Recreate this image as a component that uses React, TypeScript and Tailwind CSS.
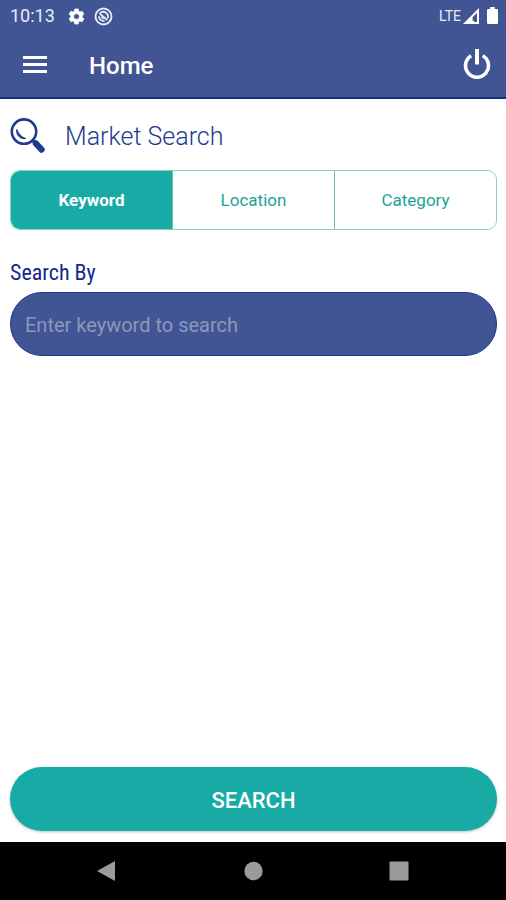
import { useState } from 'react'

const TABS = ['Keyword', 'Location', 'Category']

function StatusBar() {
  return (
    <div className="flex h-8 items-center justify-between pl-[10px] pr-2 text-[#e6ebf5]">
      <div className="flex items-center">
        <span className="w-[57px] text-lg leading-8">10:13</span>
        {/* Gear */}
        <svg className="mr-2 h-[19px] w-[19px]" viewBox="0 0 24 24" fill="#fff" stroke="#fff" strokeWidth="0.8">
          <path d="M19.14 12.94c.04-.3.06-.61.06-.94 0-.32-.02-.64-.07-.94l2.03-1.58a.49.49 0 0 0 .12-.61l-1.92-3.32a.49.49 0 0 0-.59-.22l-2.39.96c-.5-.38-1.03-.7-1.62-.94l-.36-2.54a.48.48 0 0 0-.48-.41h-3.84c-.24 0-.43.17-.47.41l-.36 2.54c-.59.24-1.13.57-1.62.94l-2.39-.96a.49.49 0 0 0-.59.22L2.74 8.87c-.12.21-.08.47.12.61l2.03 1.58c-.05.3-.09.63-.09.94s.02.64.07.94l-2.03 1.58a.49.49 0 0 0-.12.61l1.92 3.32c.12.22.37.29.59.22l2.39-.96c.5.38 1.03.7 1.62.94l.36 2.54c.05.24.24.41.48.41h3.84c.24 0 .44-.17.47-.41l.36-2.54c.59-.24 1.13-.56 1.62-.94l2.39.96c.22.08.47 0 .59-.22l1.92-3.32a.49.49 0 0 0-.12-.61l-2.01-1.58zM12 15.6A3.6 3.6 0 1 1 12 8.4a3.6 3.6 0 0 1 0 7.2z" />
        </svg>
        {/* Round notification mark */}
        <svg className="h-[19px] w-[19px]" viewBox="0 0 19 19" fill="none" stroke="currentColor">
          <circle cx="9.5" cy="9.5" r="8" strokeWidth="1.9" />
          <path d="M6 6.2a4.7 4.7 0 0 1 7.6 5.2" strokeWidth="1.8" />
          <path d="M5 9.2a4.6 4.6 0 0 0 5.6 4.6" strokeWidth="1.8" />
          <path d="M5.4 6.4l7.8 6.6" strokeWidth="1.8" />
          <path d="M7.4 9.6a2.2 2.2 0 0 0 2.4 2" strokeWidth="1.3" />
        </svg>
      </div>
      <div className="flex items-center">
        <span className="mr-[2px] text-sm leading-8">LTE</span>
        <svg className="mr-2 h-4 w-4" viewBox="0 0 16 16">
          <path d="M16 0v16H0zM14 4.8L9.6 9.2v3.6h1.6V14H14z" fill="#fff" fillRule="evenodd" />
        </svg>
        <svg className="h-[18px] w-[11px]" viewBox="0 0 11 18" fill="#fff">
          <path d="M3.2 0h4.6v2H9.8q1.2 0 1.2 1.2v12.6q0 1.2-1.2 1.2H1.2Q0 17 0 15.8V3.2Q0 2 1.2 2h2z" />
        </svg>
      </div>
    </div>
  )
}

function MagnifierIcon() {
  return (
    <svg className="h-9 w-9" viewBox="0 0 36 36" fill="none" stroke="#213a8d">
      <circle cx="14" cy="13.6" r="12.2" strokeWidth="2.6" />
      <path d="M6.8 11.5a7.6 7.6 0 0 0 9 9q-6-1.6-9-9z" fill="#213a8d" strokeWidth="1" />
      <path d="M22.4 22.2l3 3" strokeWidth="2.8" />
      <path d="M25.8 25.4l5.8 6.2" strokeWidth="6.2" strokeLinecap="round" />
    </svg>
  )
}

export default function App() {
  const [tab, setTab] = useState('Keyword')
  const [query, setQuery] = useState('')

  return (
    <div className="flex min-h-screen flex-col bg-white font-[Roboto,sans-serif]">
      <header className="border-b-2 border-[#122e86] bg-[#415595]">
        <StatusBar />
        <div className="flex h-[65px] items-center pl-[23px] pr-[15px] text-white">
          <button type="button" aria-label="Menu" className="mr-[42px]">
            <svg className="block h-[18px] w-6" viewBox="0 0 24 18" fill="currentColor">
              <path d="M0 0h24v3H0zM0 7h24v3H0zM0 14h24v3H0z" />
            </svg>
          </button>
          <h1 className="flex-1 pt-[2px] text-2xl font-medium">Home</h1>
          <button type="button" aria-label="Log out">
            <svg className="block h-[31px] w-7" viewBox="0 0 28 31" fill="none" stroke="currentColor" strokeWidth="3.6">
              <path d="M8.2 6.8a11.5 11.5 0 1 0 11.6 0" />
              <path d="M14 0v15.5" strokeWidth="4" />
            </svg>
          </button>
        </div>
      </header>

      <main className="flex flex-1 flex-col pb-[11px] pl-[10px] pr-[9px] pt-[19px]">
        <div className="flex h-9 items-center">
          <MagnifierIcon />
          <h2 className="ml-[19px] pt-[2px] text-[25px] font-light text-[#213a8d]">Market Search</h2>
        </div>

        {/* Search type */}
        <div role="tablist" className="mt-4 flex h-[60px] overflow-hidden rounded-[10px] border border-[#8fcbc1]">
          {TABS.map(name => (
            <button
              key={name}
              type="button"
              role="tab"
              aria-selected={tab === name}
              onClick={() => setTab(name)}
              className={`flex-1 border-l border-[#6dbdb0] pt-[2px] text-[17px] first:border-l-0 ${tab === name ? 'bg-[#18aba6] font-bold text-white' : 'bg-white text-[#1ba396]'}`}
            >
              {name}
            </button>
          ))}
        </div>

        <label htmlFor="query" className="mt-7 h-[34px] font-['Roboto_Condensed',Roboto,sans-serif] text-[22px] leading-[30px] text-[#14278a]">
          Search By
        </label>
        <input
          id="query"
          type="text"
          value={query}
          onChange={e => setQuery(e.target.value)}
          placeholder="Enter keyword to search"
          className="h-16 rounded-full border border-[#16368a] bg-[#415595] px-[14px] pt-px text-xl text-white outline-none placeholder:text-[#8c98b9]"
        />

        <button type="submit" className="mt-auto h-16 rounded-full bg-[#18aba6] pt-[2px] text-[22px] font-medium text-white shadow-[0_1px_3px_rgba(0,0,0,0.25)]">
          SEARCH
        </button>
      </main>

      <nav className="flex h-[58px] items-center justify-center gap-[126px] bg-black text-[#9b9b9b]">
        <button type="button" aria-label="Back">
          <svg className="block h-5 w-5" viewBox="0 0 20 20" fill="currentColor">
            <path d="M18 0v20L0 10z" />
          </svg>
        </button>
        <button type="button" aria-label="Home screen">
          <svg className="block h-5 w-5" viewBox="0 0 20 20" fill="currentColor">
            <circle cx="10.5" cy="10" r="9.2" />
          </svg>
        </button>
        <button type="button" aria-label="Recent apps">
          <svg className="block h-5 w-5" viewBox="0 0 20 20" fill="currentColor">
            <rect x="0.5" y="0.5" width="19" height="19" rx="1" />
          </svg>
        </button>
      </nav>
    </div>
  )
}
